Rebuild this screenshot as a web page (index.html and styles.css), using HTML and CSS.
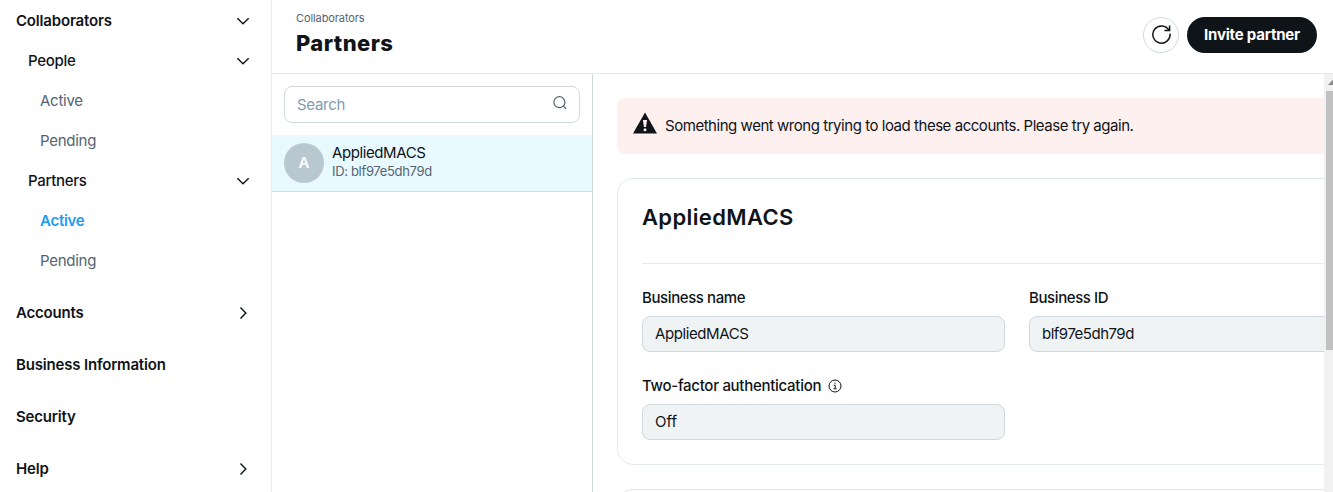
FILE: index.html
```html
<!DOCTYPE html>
<html lang="en">
<head>
<meta charset="utf-8">
<title>Partners</title>
<link rel="stylesheet" href="styles.css">
</head>
<body>
<div class="app">
  <nav class="sidebar">
    <div class="nav-row top"><span>Collaborators</span><svg class="chev" viewBox="0 0 16 16"><path d="M2.3 5.3 8 10.8l5.7-5.5"/></svg></div>
    <div class="nav-row mid"><span>People</span><svg class="chev" viewBox="0 0 16 16"><path d="M2.3 5.3 8 10.8l5.7-5.5"/></svg></div>
    <div class="nav-row leaf"><span>Active</span></div>
    <div class="nav-row leaf"><span>Pending</span></div>
    <div class="nav-row mid"><span>Partners</span><svg class="chev" viewBox="0 0 16 16"><path d="M2.3 5.3 8 10.8l5.7-5.5"/></svg></div>
    <div class="nav-row leaf current"><span>Active</span></div>
    <div class="nav-row leaf"><span>Pending</span></div>
    <div class="nav-row top section"><span>Accounts</span><svg class="chev" viewBox="0 0 16 16"><path d="M5.5 2.5 10.8 8l-5.3 5.5"/></svg></div>
    <div class="nav-row top section"><span>Business Information</span></div>
    <div class="nav-row top section"><span>Security</span></div>
    <div class="nav-row top section"><span>Help</span><svg class="chev" viewBox="0 0 16 16"><path d="M5.5 2.5 10.8 8l-5.3 5.5"/></svg></div>
  </nav>
  <div class="main">
    <header class="header">
      <div class="titles">
        <div class="crumb">Collaborators</div>
        <h1 class="title">Partners</h1>
      </div>
      <div class="actions">
        <button class="refresh" aria-label="Refresh"><svg viewBox="0 0 20 20"><path d="M17.9 6.2A8.6 8.6 0 1 0 19 9.6M18.6 1.6v5h-5.2"/></svg></button>
        <button class="invite"><span>Invite partner</span></button>
      </div>
    </header>
    <div class="body">
      <section class="list">
        <div class="search"><span>Search</span><svg viewBox="0 0 16 16"><circle cx="7.4" cy="7.2" r="5.5"/><path d="m11.3 11.1 2.9 2.7"/></svg></div>
        <div class="partner">
          <div class="avatar">A</div>
          <div class="who">
            <div class="name">AppliedMACS</div>
            <div class="pid">ID: blf97e5dh79d</div>
          </div>
        </div>
      </section>
      <section class="detail">
        <div class="content">
          <div class="alert"><svg viewBox="0 0 24 22"><path class="tri" d="M12 .4 24 21.4H0z"/><path class="bang" d="M9.9 8h4.2l-1.1 7h-2z"/><circle class="bang" cx="12" cy="17.8" r="1.5"/></svg><span>Something went wrong trying to load these accounts. Please try again.</span></div>
          <div class="card">
            <h2 class="card-title">AppliedMACS</h2>
            <div class="fields">
              <div class="field"><div class="label">Business name</div><div class="value">AppliedMACS</div></div>
              <div class="field"><div class="label">Business ID</div><div class="value code">blf97e5dh79d</div></div>
              <div class="field"><div class="label wide"><span>Two-factor authentication</span><svg viewBox="0 0 14 14"><circle cx="7" cy="7" r="6"/><path d="M5.7 6.2H7.2V9.7M5.5 9.8h3.2M6.4 4.2h1.2"/></svg></div><div class="value short">Off</div></div>
            </div>
          </div>
          <div class="card next"></div>
        </div>
        <div class="scrollbar"><svg class="arrow" viewBox="0 0 17 17"><path d="M4 11h9L8.5 6z"/></svg><div class="thumb"></div></div>
      </section>
    </div>
  </div>
</div>
</body>
</html>
```
FILE: styles.css
```css
* { box-sizing: border-box; }
body {
  margin: 0;
  background: #fff;
  color: #0f1419;
  font: 15px/20px Inter, "Liberation Sans", sans-serif;
  overflow: hidden;
}
svg { display: block; flex: none; fill: none; }
button { font: inherit; margin: 0; padding: 0; }
.app { display: flex; width: 1333px; height: 492px; overflow: hidden; }
.sidebar { width: 272px; flex: none; padding-top: 1px; border-right: 1px solid #e6eaeb; white-space: nowrap; }
.nav-row { display: flex; align-items: center; justify-content: space-between; height: 40px; padding-right: 20px; }
.top { padding-left: 16px; font-weight: 600; letter-spacing: -.18px; }
.mid { padding-left: 28px; font-weight: 500; letter-spacing: -.3px; }
.leaf { padding-left: 40px; color: #536471; letter-spacing: -.26px; }
.current { color: #1d9bf0; font-weight: 600; }
.section { margin-top: 12px; }
.chev { width: 16px; height: 16px; stroke: #0f1419; stroke-width: 1.4; }

.main { flex: 1; min-width: 0; display: flex; flex-direction: column; }
.header { height: 74px; flex: none; display: flex; justify-content: space-between; padding: 10px 16px 0 24px; border-bottom: 1px solid #e6eaeb; }
.crumb { font-size: 11px; line-height: 16px; letter-spacing: -.1px; color: #536471; }
.title { margin: 3px 0 0; font-size: 22px; line-height: 28px; font-weight: 800; letter-spacing: .42px; }
.actions { display: flex; gap: 8px; padding-top: 7px; }
.refresh { width: 36px; height: 36px; border: 1px solid #cfd9de; border-radius: 50%; background: #fff; display: grid; place-items: center; }
.refresh svg { width: 20px; height: 20px; margin: -2px 0 0; stroke: #0f1419; stroke-width: 1.5; }
.invite { width: 130px; height: 36px; border: 0; border-radius: 18px; background: #0f1419; color: #fff; font-weight: 700; letter-spacing: -.2px; }

.body { flex: 1; min-height: 0; display: flex; }
.list { width: 321px; flex: none; border-right: 1px solid #cfd9de; }
.search { height: 37px; margin: 12px 12px 12px; padding: 0 11px 0 12px; border: 1px solid #cfd9de; border-radius: 8px; display: flex; justify-content: space-between; align-items: center; color: #829aab; letter-spacing: -.3px; }
.search svg { width: 16px; height: 16px; margin-bottom: 3px; stroke: #536471; stroke-width: 1.2; }
.partner { height: 57px; display: flex; align-items: center; gap: 8px; padding: 0 12px; background: #e8f9ff; border-bottom: 1px solid #cfd9de; }
.avatar { width: 40px; height: 40px; border-radius: 50%; background: #b9c8d0; color: #fff; display: grid; place-items: center; font-weight: 600; }
.who { padding-bottom: 4px; }
.name { line-height: 20px; letter-spacing: -.4px; }
.pid { font-size: 13px; line-height: 16px; letter-spacing: -.33px; color: #536471; }

.detail { flex: 1; min-width: 0; display: flex; overflow: hidden; }
.content { flex: 1; min-width: 0; overflow: hidden; padding: 24px 0 0 24px; }
.alert { width: 800px; height: 56px; display: flex; align-items: center; gap: 8px; padding: 0 16px; border-radius: 8px; background: #fff0f0; white-space: nowrap; letter-spacing: -.46px; }
.alert svg { width: 24px; height: 22px; margin-bottom: 7px; }
.tri { fill: #0f1419; }
.bang { fill: #fff0f0; }
.card { width: 800px; height: 287px; margin-top: 24px; padding: 0 24px; border: 1px solid #e3e9ea; border-radius: 16px; }
.card-title { margin: 0; height: 85px; padding-top: 24px; border-bottom: 1px solid #e6eaeb; font-size: 22px; line-height: 28px; font-weight: 600; letter-spacing: .36px; }
.fields { display: grid; grid-template-columns: 363px 363px; gap: 24px; padding-top: 24px; }
.label { display: flex; align-items: center; gap: 7px; height: 20px; margin-bottom: 8px; font-weight: 500; letter-spacing: -.4px; white-space: nowrap; }
.wide { letter-spacing: -.28px; }
.label svg { width: 14px; height: 14px; stroke: #0f1419; stroke-width: 1; }
.value { height: 36px; padding: 0 12px; border: 1px solid #cfd9de; border-radius: 8px; background: #eff3f4; line-height: 34px; letter-spacing: -.4px; }
.code { letter-spacing: -.5px; }
.short { letter-spacing: 0; }
.scrollbar { width: 9px; flex: none; background: #f1f1f1; overflow: hidden; }
.arrow { width: 17px; height: 17px; fill: #8a8a8a; }
.thumb { width: 7px; height: 259px; margin-left: 2px; background: #c1c1c1; }
```
